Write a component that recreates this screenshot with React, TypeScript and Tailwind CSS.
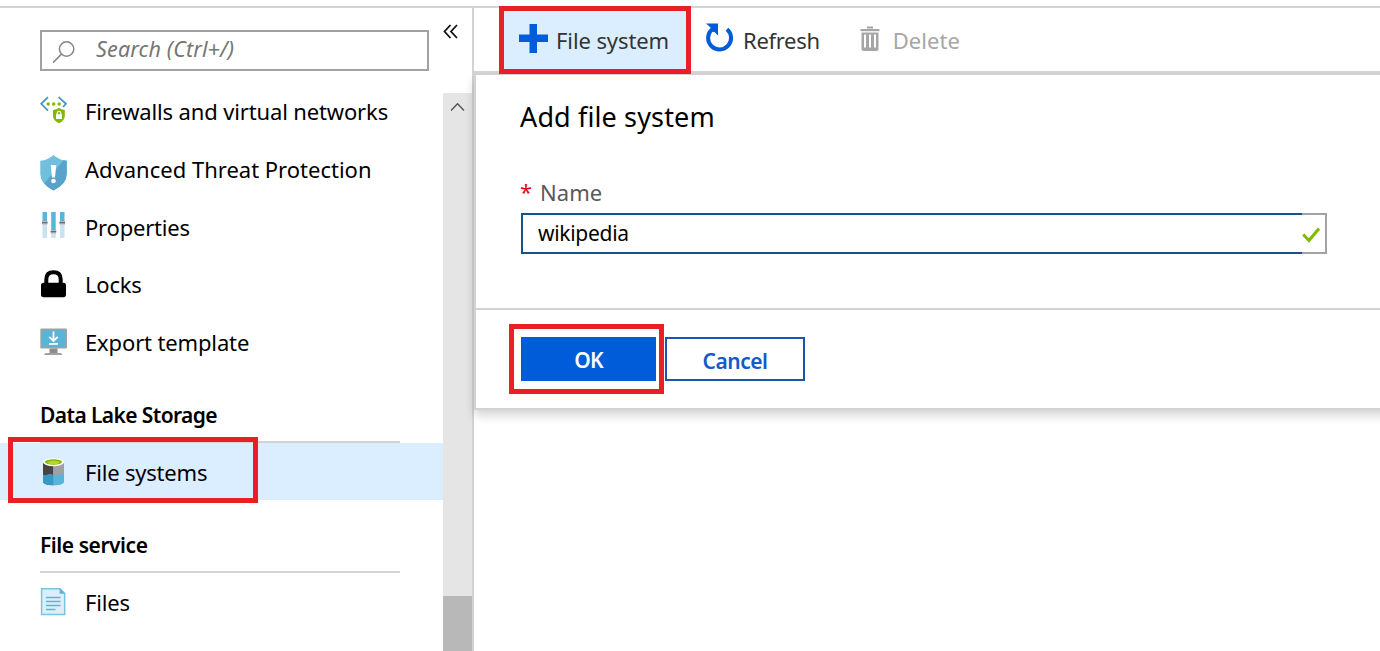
import React from "react";

function FirewallIcon() {
  return (
    <svg className="-mt-[2px] block" width="28" height="28" viewBox="0 0 28 28" fill="none">
      <path d="M8 1.2 L1.2 7.8 L8 14.6" stroke="#3f92cc" strokeWidth="1.7" />
      <path d="M18.600 1.2 L26 7.900 L23 11" stroke="#3f92cc" strokeWidth="1.7" />
      <circle cx="8.200" cy="8" r="1.700" fill="#7fba00" />
      <circle cx="13.700" cy="8" r="1.700" fill="#7fba00" />
      <circle cx="19.200" cy="8" r="1.700" fill="#7fba00" />
      <path d="M13 14 Q17 13.600 19 11.800 Q21 13.600 24.800 14 V20 Q24.800 24.600 19 27.200 Q13 24.600 13 20 Z" fill="#7fba00" />
      <rect x="16" y="18.200" width="6" height="4.800" fill="#fff" />
      <path d="M17.300 18.500 V17 Q17.300 15.400 19 15.400 Q20.700 15.400 20.700 17 V18.500" stroke="#fff" strokeWidth="1.200" />
    </svg>
  );
}

function ShieldIcon() {
  return (
    <svg className="mt-[8px] block" width="28" height="36" viewBox="0 0 28 36">
      <path d="M13.500 0 Q8 5 0.300 5.800 V19 Q0.300 29 13.500 35.600 Q26.700 29 26.700 19 V5.800 Q19 5 13.500 0 Z" fill="#6fbfdd" />
      <path d="M23.500 5.200 L26.700 5.800 V19 Q26.700 29 13.500 35.600 Q7.500 32.600 4.400 28.600 Z" fill="#57a3cb" />
      <path d="M10.700 10 H16.300 L15 22.500 H12 Z" fill="#fff" />
      <circle cx="13.500" cy="26" r="2.300" fill="#fff" />
    </svg>
  );
}

function SlidersIcon() {
  return (
    <svg className="-mt-[2px] block" width="28" height="28" viewBox="0 0 28 28">
      <g fill="#c9e4f0">
        <rect x="2.500" y="11" width="4.500" height="16" />
        <rect x="11.200" y="20" width="4.500" height="7" />
        <rect x="20" y="11" width="4.500" height="16" />
      </g>
      <g fill="#59b4d9">
        <rect x="2.500" y="1" width="4.500" height="10" />
        <rect x="11.200" y="1" width="4.500" height="19" />
        <rect x="20" y="1" width="4.500" height="10" />
      </g>
      <g fill="#b9b9b9">
        <rect x="2" y="10" width="5.500" height="3.500" />
        <rect x="10.700" y="19" width="5.500" height="3.500" />
        <rect x="19.500" y="10" width="5.500" height="3.500" />
      </g>
      <g fill="#6e6e6e">
        <rect x="2" y="11" width="5.500" height="1.300" />
        <rect x="10.700" y="20" width="5.500" height="1.300" />
        <rect x="19.500" y="11" width="5.500" height="1.300" />
      </g>
    </svg>
  );
}

function LockIcon() {
  return (
    <svg className="block" width="28" height="28" viewBox="0 0 28 28">
      <rect x="1" y="12.700" width="25" height="14.500" rx="2.600" fill="#000" />
      <path d="M6.300 14 V9.400 Q6.300 2.200 13.500 2.200 Q20.700 2.200 20.700 9.400 V14" fill="none" stroke="#000" strokeWidth="4" />
    </svg>
  );
}

function MonitorIcon() {
  return (
    <svg className="block" width="28" height="28" viewBox="0 0 28 28">
      <rect x="0.300" y="0.500" width="26.700" height="20" rx="1.200" fill="#a0a1a2" />
      <rect x="2" y="2.300" width="23.300" height="16.500" fill="#59b4d9" />
      <path d="M9.500 20.500 H17.500 V25 H9.500 Z" fill="#8c8d8e" />
      <path d="M5.500 25 H21 L22.500 27 H4 Z" fill="#a0a1a2" />
      <path d="M13.500 3.500 V13 M9.300 8.800 L13.500 13 L17.700 8.800" fill="none" stroke="#fff" strokeWidth="1.800" />
      <rect x="9" y="15" width="9" height="1.800" fill="#fff" />
    </svg>
  );
}

function LakeIcon() {
  return (
    <svg className="block" width="28" height="28" viewBox="0 0 28 28">
      <path d="M3 4 H13.500 V27.200 Q3 27.200 3 23.500 Z" fill="#454545" />
      <path d="M13.500 4 H24 V23.500 Q24 27.200 13.500 27.200 Z" fill="#a0a1a2" />
      <path d="M3 16.200 Q5.500 18 8.500 16.300 Q11 14.800 13.500 17.500 V27.200 Q3 27.200 3 23.500 Z" fill="#3999c6" />
      <path d="M13.500 17.500 Q17 18.500 19.500 16.500 Q22 14.800 24 16.300 V23.500 Q24 27.200 13.500 27.200 Z" fill="#59b4d9" />
      <ellipse cx="13.500" cy="4.200" rx="10.500" ry="4" fill="#fff" />
      <ellipse cx="13.500" cy="4" rx="8.500" ry="2.700" fill="#7fba00" />
      <ellipse cx="13.500" cy="4.500" rx="6" ry="1.700" fill="#b8d432" />
    </svg>
  );
}

function FileIcon() {
  return (
    <svg className="block" width="28" height="28" viewBox="0 0 28 28">
      <path d="M1.600 0.800 H20 L24.700 5.500 V26.600 H1.600 Z" fill="#dceff7" stroke="#7ac3e1" strokeWidth="1.500" />
      <path d="M19.600 0.200 L25.300 5.800 H19.600 Z" fill="#59b4d9" />
      <path d="M6 9.500 H20.500 M6 13.500 H20.500 M6 17.500 H20.500 M6 21.500 H15.500" stroke="#59b4d9" strokeWidth="1.500" />
    </svg>
  );
}

interface NavItemProps {
  icon: React.ReactNode;
  label: string;
  spacing: string;
  active?: boolean;
}

function NavItem({ icon, label, spacing, active }: NavItemProps) {
  return (
    <div className={`flex shrink-0 items-center pl-10 ${active ? "h-[57px] bg-[#dbeeff] pt-px" : "h-[57.700px]"}`}>
      <span className="flex w-[45px] items-center">{icon}</span>
      <span className={`whitespace-nowrap text-[22px] leading-none text-black ${spacing}`}>{label}</span>
    </div>
  );
}

function Sidebar() {
  return (
    <aside className="flex w-[474px] shrink-0 flex-col border-r-2 border-[#d3d3d3]">
      <div className="flex h-[75px] shrink-0 items-start pl-10">
        <div className="mt-[22px] flex h-[41px] w-[389px] items-center border-2 border-[#a2a2a2] pl-[10px]">
          <svg className="mt-[2px] block" width="24" height="24" viewBox="0 0 24 24" fill="none" stroke="#858585" strokeWidth="1.500">
            <circle cx="14.600" cy="9" r="7.200" />
            <path d="M9.500 14.100 L1 22.600" />
          </svg>
          <span className="-mt-[3px] ml-[20px] whitespace-nowrap text-[21.500px] italic leading-none tracking-[0.150px] text-[#757575]">
            Search (Ctrl+/)
          </span>
        </div>
        <svg className="mt-[15px] ml-[14px] block" width="16" height="18" viewBox="0 0 16 18" fill="none" stroke="#111" strokeWidth="1.800">
          <path d="M7.500 2 L1.500 8.500 L7.500 15" />
          <path d="M14 2 L8 8.500 L14 15" />
        </svg>
      </div>
      <div className="flex min-h-0 grow">
        <nav className="-mt-px flex w-[443px] shrink-0 flex-col overflow-hidden">
          <NavItem icon={<FirewallIcon />} label="Firewalls and virtual networks" spacing="tracking-[-0.140px]" />
          <NavItem icon={<ShieldIcon />} label="Advanced Threat Protection" spacing="tracking-normal" />
          <NavItem icon={<SlidersIcon />} label="Properties" spacing="pt-[2px] tracking-[-0.200px]" />
          <NavItem icon={<LockIcon />} label="Locks" spacing="tracking-[-0.200px]" />
          <NavItem icon={<MonitorIcon />} label="Export template" spacing="tracking-[-0.140px]" />
          <div className="ml-10 flex h-[72.500px] w-[360px] shrink-0 items-center border-b-2 border-[#d3d3d3] pt-[19px]">
            <h3 className="whitespace-nowrap text-[21px] font-semibold leading-none tracking-[-0.600px] text-black">Data Lake Storage</h3>
          </div>
          <div className="relative shrink-0">
            <NavItem icon={<LakeIcon />} label="File systems" spacing="tracking-[-0.200px]" active />
            <div className="absolute -top-[6px] left-2 h-[66px] w-[250px] border-5 border-[#e81f27]" />
          </div>
          <div className="ml-10 flex h-[73px] w-[360px] shrink-0 items-center border-b-2 border-[#d3d3d3] pt-[20px]">
            <h3 className="whitespace-nowrap text-[21px] font-semibold leading-none tracking-[-0.450px] text-black">File service</h3>
          </div>
          <NavItem icon={<FileIcon />} label="Files" spacing="tracking-[-0.200px]" />
        </nav>
        <div className="mt-[10px] flex w-[29px] flex-col justify-between bg-[#e5e5e5]">
          <svg className="mt-[8px] ml-[7px] block" width="15" height="12" viewBox="0 0 15 12" fill="none" stroke="#505050" strokeWidth="1.300">
            <path d="M1 9.500 L7.500 2.800 L14 9.500" />
          </svg>
          <div className="h-[55px] bg-[#b8b8b8]" />
        </div>
      </div>
    </aside>
  );
}

function Toolbar() {
  return (
    <div className="flex h-[67px] shrink-0 items-center border-b-4 border-[#d5d6d6]">
      <button className="relative -mt-[2px] -mb-[3px] ml-[25px] flex h-[68px] w-[192px] shrink-0 items-center self-start border-5 border-[#e81f27] bg-[#dbeeff]">
        <svg className="-mt-[3px] ml-[15px] block" width="29" height="29" viewBox="0 0 29 29">
          <path d="M10.500 0 H18 V10.500 H29 V18 H18 V29 H10.500 V18 H0 V10.500 H10.500 Z" fill="#015cda" />
        </svg>
        <span className="ml-[8px] whitespace-nowrap text-[22px] leading-none tracking-[-0.100px] text-[#333]">File system</span>
      </button>
      <button className="ml-[14px] flex shrink-0 items-center">
        <svg className="-mt-[3px] block" width="29" height="30" viewBox="0 0 29 30">
          <path d="M22 6.200 A11.500 11.500 0 1 1 6.500 6.800" fill="none" stroke="#015cda" strokeWidth="4" />
          <path d="M1 0.500 H13 V12.500 L9.500 9 L4.500 8.500 L5.500 4.500 Z" fill="#015cda" />
        </svg>
        <span className="ml-[9px] whitespace-nowrap text-[22px] leading-none tracking-[-0.300px] text-[#333]">Refresh</span>
      </button>
      <button className="ml-[40px] flex shrink-0 items-center text-[#a6a6a6]">
        <svg className="-mt-[2px] block" width="20" height="26" viewBox="0 0 20 26" fill="#a6a6a6">
          <rect x="7" y="0.500" width="6" height="2" />
          <rect x="0.500" y="3" width="19" height="2.200" />
          <path fillRule="evenodd" d="M1.500 6.500 H18.500 V23 Q18.500 25 16.500 25 H3.500 Q1.500 25 1.500 23 Z M4 8.500 V21.500 H6 V8.500 Z M9 8.500 V21.500 H11 V8.500 Z M14 8.500 V21.500 H16 V8.500 Z" />
        </svg>
        <span className="ml-[13px] whitespace-nowrap text-[22px] leading-none tracking-[0.050px]">Delete</span>
      </button>
    </div>
  );
}

function AddPanel() {
  return (
    <section className="-mr-5 flex h-[335px] shrink-0 flex-col border-b-2 border-l-2 border-[#d3d3d3] bg-white shadow-[0_5px_10px_rgba(0,0,0,0.180)]">
      <div className="flex h-[235px] shrink-0 flex-col border-b-2 border-[#d3d3d3] pl-[45px]">
        <h2 className="-ml-px mt-[28px] whitespace-nowrap text-[27px] leading-[27px] tracking-[0.130px] text-black">Add file system</h2>
        <label className="mt-[50px] flex h-[24px] items-center text-[22px] leading-none text-[#595959]">
          <span className="-mt-[2px] -ml-px w-[20px] text-[#e00b1c]">*</span>
          <span className="tracking-[0.050px]">Name</span>
        </label>
        <div className="mt-[9px] flex h-[41px] w-[806px]">
          <div className="flex w-[781px] items-center border-2 border-r-0 border-[#0f548c] pl-[15px]">
            <span className="text-[21px] leading-none tracking-[-0.300px] text-black">wikipedia</span>
          </div>
          <div className="flex w-[25px] items-center border-2 border-l-0 border-[#a3a3a3]">
            <svg className="mt-[3px] block" width="19" height="18" viewBox="0 0 19 18" fill="none" stroke="#7fba00" strokeWidth="3">
              <path d="M1.200 8.500 L7 14.500 L17 2.500" />
            </svg>
          </div>
        </div>
      </div>
      <div className="flex grow items-center pl-[33px]">
        <div className="flex h-[70px] w-[155px] items-center border-5 border-[#e81f27] pl-[7px]">
          <button className="h-[44px] w-[135px] bg-[#015cda] pt-[3px] text-[21px] font-semibold leading-none tracking-[-0.700px] text-white">OK</button>
        </div>
        <button className="ml-px h-[44px] w-[140px] border-2 border-[#1558ad] bg-white pt-[4px] text-[21px] font-semibold leading-none tracking-[-0.500px] text-[#125bc9]">
          Cancel
        </button>
      </div>
    </section>
  );
}

export default function App() {
  return (
    <div className="flex h-[651px] w-[1380px] flex-col overflow-hidden bg-white pt-[6px] font-['Noto_Sans',sans-serif]">
      <div className="flex min-h-0 grow border-t-2 border-[#d5d5d5]">
        <Sidebar />
        <main className="flex min-w-0 grow flex-col">
          <Toolbar />
          <AddPanel />
        </main>
      </div>
    </div>
  );
}
